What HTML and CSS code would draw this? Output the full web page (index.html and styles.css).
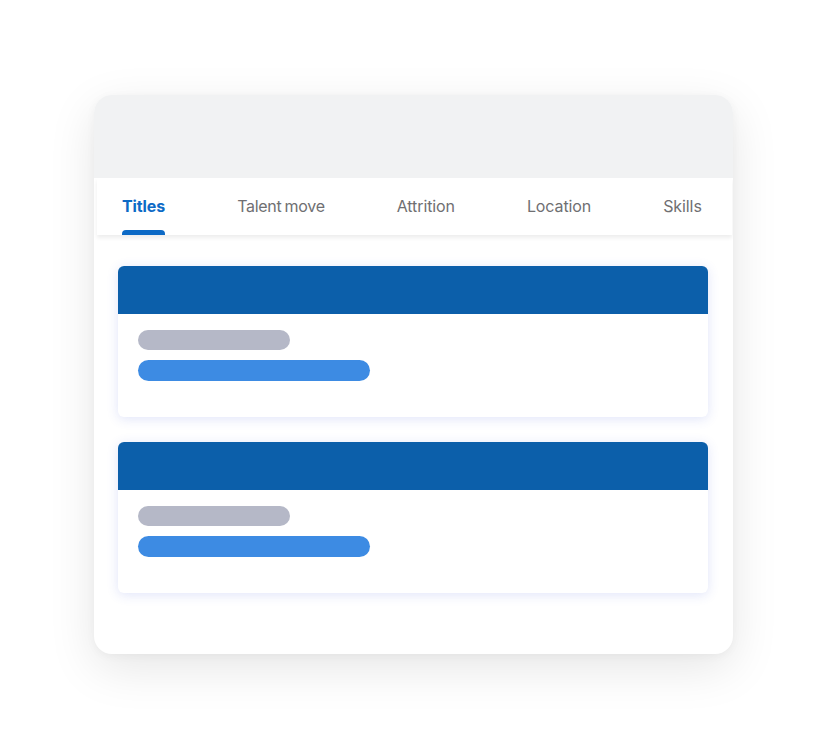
FILE: index.html
```html
<!DOCTYPE html>
<html>
<head>
<meta charset="utf-8">
<link rel="stylesheet" href="styles.css">
</head>
<body>
<div class="frame">
  <div class="top"></div>
  <div class="tabs">
    <div class="tab active">Titles</div>
    <div class="tab tight">Talent move</div>
    <div class="tab">Attrition</div>
    <div class="tab">Location</div>
    <div class="tab">Skills</div>
  </div>
  <div class="content">
    <div class="card">
      <div class="card-head"></div>
      <div class="card-body">
        <div class="bar gray"></div>
        <div class="bar blue"></div>
      </div>
    </div>
    <div class="card">
      <div class="card-head"></div>
      <div class="card-body">
        <div class="bar gray"></div>
        <div class="bar blue"></div>
      </div>
    </div>
  </div>
</div>
</body>
</html>
```

FILE: styles.css
```css
html, body {
  margin: 0;
  padding: 0;
  background: #ffffff;
}
body {
  width: 825px;
  height: 746px;
  overflow: hidden;
  font-family: Inter, "Liberation Sans", sans-serif;
}
.frame {
  margin: 95px 0 0 94px;
  width: 639px;
  height: 559px;
  border-radius: 18px;
  background: #ffffff;
  box-shadow: 0 14px 48px rgba(0, 0, 0, 0.10), 0 2px 10px rgba(0, 0, 0, 0.04);
  overflow: hidden;
  display: flex;
  flex-direction: column;
}
.top {
  height: 83px;
  background: #f1f2f3;
}
.tabs {
  margin: 0 1px 0 3px;
  height: 57px;
  background: #ffffff;
  display: flex;
  gap: 72px;
  padding-left: 25px;
  box-shadow: 0 3px 4px rgba(0, 0, 0, 0.07);
  position: relative;
  z-index: 1;
}
.tab {
  position: relative;
  font-size: 16px;
  line-height: 57px;
  color: #6f6f72;
  letter-spacing: -0.1px;
}
.tab.tight {
  letter-spacing: -0.3px;
  word-spacing: -1px;
}
.tab.active {
  color: #0d6ac6;
  font-weight: 700;
}
.tab.active::after {
  content: "";
  position: absolute;
  left: 0;
  right: 0;
  bottom: 0;
  height: 5px;
  background: #0d6ac6;
  border-radius: 4px 4px 0 0;
}
.content {
  padding: 31px 25px 0 24px;
  display: flex;
  flex-direction: column;
  gap: 25px;
}
.card {
  height: 151px;
  border-radius: 6px;
  background: #ffffff;
  overflow: hidden;
  box-shadow: 0 2px 12px rgba(60, 90, 220, 0.16);
}
.card-head {
  height: 48px;
  background: #0c5faa;
}
.card-body {
  padding: 16px 20px 0;
  display: flex;
  flex-direction: column;
  gap: 10px;
}
.bar {
  height: 21px;
  border-radius: 11px;
}
.bar.gray {
  width: 152px;
  height: 20px;
  background: #b5b8c7;
}
.bar.blue {
  width: 232px;
  background: #3d8be3;
}
```
